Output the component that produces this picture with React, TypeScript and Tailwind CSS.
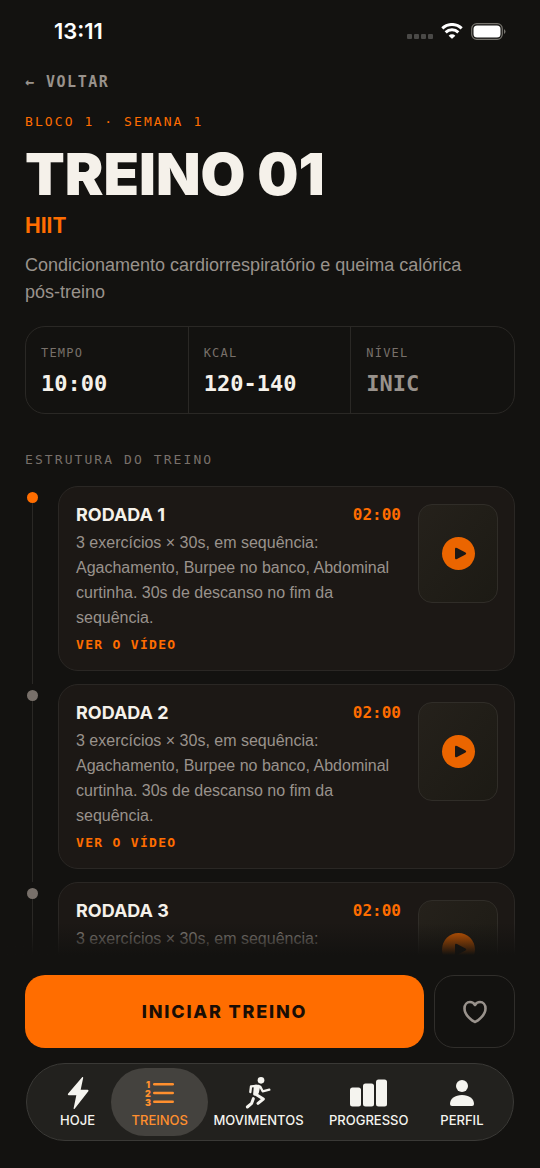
import { useState } from "react";
import type { ReactNode } from "react";

interface Round {
  id: number;
  title: string;
  time: string;
  description: string;
}

interface Tab {
  label: string;
  icon: ReactNode;
}

const description =
  "3 exercícios × 30s, em sequência: Agachamento, Burpee no banco, Abdominal curtinha. 30s de descanso no fim da sequência.";

const rounds: Round[] = [
  { id: 1, title: "RODADA 1", time: "02:00", description },
  { id: 2, title: "RODADA 2", time: "02:00", description },
  { id: 3, title: "RODADA 3", time: "02:00", description },
];

const stats = [
  { label: "TEMPO", value: "10:00", color: "text-[#f5f1ea]" },
  { label: "KCAL", value: "120-140", color: "text-[#f5f1ea]" },
  { label: "NÍVEL", value: "INIC", color: "text-[#99928c]" },
];

const mono = "font-['DejaVu_Sans_Mono',monospace]";

function WifiIcon() {
  return (
    <svg width="22" height="16" viewBox="0 0 66 48" fill="none" aria-hidden="true">
      <path d="M4 16 A42 42 0 0 1 62 16" stroke="#fff" strokeWidth="9" />
      <path d="M14 28 A27 27 0 0 1 52 28" stroke="#fff" strokeWidth="9" />
      <path d="M23 38 A14 14 0 0 1 43 38 L35 46 Q33 48 31 46 Z" fill="#fff" />
    </svg>
  );
}

function BatteryIcon() {
  return (
    <svg width="35" height="17" viewBox="0 0 35 17" fill="none" aria-hidden="true">
      <rect x="0.700" y="0.700" width="30.600" height="15.600" rx="5" stroke="#77756f" strokeWidth="1.200" />
      <rect x="2.500" y="2.500" width="27" height="12" rx="3.500" fill="#fff" />
      <path d="M33 6 Q34.500 7 34.500 8.500 Q34.500 10 33 11 Z" fill="#77756f" />
    </svg>
  );
}

function BoltIcon() {
  return (
    <svg width="22" height="34" viewBox="0 0 66 102" fill="currentColor" aria-hidden="true">
      <path d="M46 3 Q49 2 48.500 6 L41 41 H62 Q66 42 64 46 L23 98 Q19 101 20 96 L28 58 H5 Q1 57 3 53 Z" />
    </svg>
  );
}

function ListIcon() {
  return (
    <svg width="32" height="28" viewBox="0 0 32 28" fill="currentColor" aria-hidden="true">
      <g fontFamily="Inter, sans-serif" fontSize="9" fontWeight="900" textAnchor="middle">
        <text x="4" y="9">1</text>
        <text x="4" y="18">2</text>
        <text x="4" y="27">3</text>
      </g>
      <rect x="9" y="4" width="21" height="2.600" rx="1.300" />
      <rect x="9" y="12.700" width="21" height="2.600" rx="1.300" />
      <rect x="9" y="21.400" width="21" height="2.600" rx="1.300" />
    </svg>
  );
}

function RunIcon() {
  return (
    <svg width="26" height="34" viewBox="136 80 78 102" fill="none" stroke="currentColor" strokeLinecap="round" strokeLinejoin="round" aria-hidden="true">
      <circle cx="184" cy="93" r="10" fill="currentColor" stroke="none" />
      <path d="M170 110 L154 111 L152 128" strokeWidth="7" />
      <path d="M167 111 L177 111 L173 130 L165 134 Z" fill="currentColor" strokeWidth="9" />
      <path d="M182 112 L189 126 L209 121" strokeWidth="7" />
      <path d="M167 134 L191 149 L175 162" strokeWidth="9" />
      <path d="M161 148 L156 162 L143 173" strokeWidth="9" />
    </svg>
  );
}

function BarsIcon() {
  return (
    <svg width="37" height="28" viewBox="0 0 37 28" fill="currentColor" aria-hidden="true">
      <rect x="0" y="8.500" width="11" height="19" rx="2.500" />
      <rect x="13" y="4.500" width="11" height="23" rx="2.500" />
      <rect x="26" y="0.500" width="11" height="27" rx="2.500" />
    </svg>
  );
}

function PersonIcon() {
  return (
    <svg width="26" height="28" viewBox="0 0 26 28" fill="currentColor" aria-hidden="true">
      <circle cx="13" cy="7" r="6" />
      <path d="M1 25 C1 19.500 6 16 13 16 C20 16 25 19.500 25 25 Q25 27 23 27 H3 Q1 27 1 25 Z" />
    </svg>
  );
}

const tabs: Tab[] = [
  { label: "HOJE", icon: <BoltIcon /> },
  { label: "TREINOS", icon: <ListIcon /> },
  { label: "MOVIMENTOS", icon: <RunIcon /> },
  { label: "PROGRESSO", icon: <BarsIcon /> },
  { label: "PERFIL", icon: <PersonIcon /> },
];

function StatusBar() {
  return (
    <div className="flex h-16 shrink-0 items-center justify-between pr-[34px] pb-[2px] pl-[54px]">
      <span className="text-[22px] leading-6 font-semibold text-white">13:11</span>
      <div className="flex items-center gap-2">
        <div className="flex gap-[2px] pt-[10px]">
          {[0, 1, 2, 3].map((dot) => (
            <span key={dot} className="size-[5px] rounded-[1px] bg-[#4a4947]" />
          ))}
        </div>
        <WifiIcon />
        <BatteryIcon />
      </div>
    </div>
  );
}

function RoundItem({ round, active }: { round: Round; active: boolean }) {
  return (
    <li className="flex gap-[18px]">
      <div className="flex w-[15px] shrink-0 flex-col items-center pt-[6px]">
        <span
          className={`size-[11px] shrink-0 rounded-full ${active ? "bg-[#ff6d00]" : "bg-[#78706a]"}`}
        />
        <span className="w-px grow bg-[#2a2825]" />
      </div>
      <article className="mb-[13px] flex min-w-0 grow items-start gap-[17px] rounded-[20px] border border-[#2a2724] bg-[#1c1815] pt-[17px] pr-4 pb-4 pl-[17px]">
        <div className="min-w-0 grow">
          <div className="flex h-[22px] items-center justify-between">
            <h3 className="text-[18px] leading-5 font-bold text-[#f5f1ea]">{round.title}</h3>
            <span className={`${mono} text-[16px] leading-5 font-bold text-[#ff6d00]`}>{round.time}</span>
          </div>
          <p className="mt-1 font-['Liberation_Sans',sans-serif] text-[16px] leading-[25px] text-[#99928c]">
            {round.description}
          </p>
          <a href="#video" className={`${mono} mt-[6px] block text-[13px] leading-[18px] font-bold tracking-[0.1em] text-[#ff6d00]`}>
            VER O VÍDEO
          </a>
        </div>
        <button
          type="button"
          aria-label={`Reproduzir ${round.title}`}
          className="flex h-[99px] w-20 shrink-0 items-center justify-center rounded-[14px] border border-[#302d28] bg-linear-to-br from-[#25211b] to-[#1c1a14]"
        >
          <span className="flex size-[33px] items-center justify-center rounded-full bg-[#eb6500]">
            <svg width="13" height="13" viewBox="0 0 13 13" fill="#1c1815" className="ml-1" aria-hidden="true">
              <path d="M1 2 Q1 0 3 1 L11.500 5.500 Q13 6.500 11.500 7.500 L3 12 Q1 13 1 11 Z" />
            </svg>
          </span>
        </button>
      </article>
    </li>
  );
}

export default function App() {
  const [activeTab, setActiveTab] = useState("TREINOS");
  const [favorite, setFavorite] = useState(false);

  return (
    <div className="flex h-dvh flex-col overflow-hidden bg-[#131210] font-['Inter',sans-serif] text-[#f5f1ea]">
      <StatusBar />

      <main className="min-h-0 grow overflow-y-auto px-[25px] pt-2 [scrollbar-width:none]">
        <a href="#voltar" className={`${mono} block text-[15px] leading-5 font-bold tracking-[0.1em] text-[#99928c]`}>
          ← VOLTAR
        </a>
        <p className={`${mono} mt-5 text-[13px] leading-5 tracking-[0.16em] text-[#ff6d00]`}>
          BLOCO 1 · SEMANA 1
        </p>
        <h1 className="mt-4 text-[58px] leading-[52px] font-black">TREINO 01</h1>
        <p className="mt-3 text-[21px] leading-7 font-bold text-[#ff6d00]">HIIT</p>
        <p className="mt-3 font-['Liberation_Sans',sans-serif] text-[18px] leading-[27px] text-[#99928c]">
          Condicionamento cardiorrespiratório e queima calórica{" "}
          <span className="whitespace-nowrap">pós-treino</span>
        </p>

        <dl className="mt-5 grid grid-cols-3 divide-x divide-[#2a2825] rounded-[20px] border border-[#2a2825]">
          {stats.map((stat) => (
            <div key={stat.label} className="px-[15px] pt-4 pb-[15px]">
              <dt className={`${mono} text-[12px] leading-5 tracking-[0.1em] text-[#78706a]`}>{stat.label}</dt>
              <dd className={`${mono} mt-[7px] text-[22px] leading-7 font-bold ${stat.color}`}>{stat.value}</dd>
            </div>
          ))}
        </dl>

        <h2 className={`${mono} mt-9 text-[13px] leading-5 tracking-[0.16em] text-[#78706a]`}>
          ESTRUTURA DO TREINO
        </h2>
        <ol className="mt-4">
          {rounds.map((round) => (
            <RoundItem key={round.id} round={round} active={round.id === 1} />
          ))}
        </ol>
      </main>

      <footer className="relative shrink-0 bg-[#131210] px-[25px] pt-5 pb-[27px]">
        {/* Fade over the scrolling list */}
        <div className="pointer-events-none absolute inset-x-0 bottom-full h-8 bg-linear-to-t from-[#131210] to-transparent" />

        <div className="flex gap-[10px]">
          <button
            type="button"
            className="h-[73px] grow rounded-[20px] bg-[#ff6d00] text-[18px] font-extrabold tracking-[0.1em] text-[#1a0e05]"
          >
            INICIAR TREINO
          </button>
          <button
            type="button"
            aria-label="Favoritar"
            aria-pressed={favorite}
            onClick={() => setFavorite(!favorite)}
            className="flex h-[73px] w-[81px] shrink-0 items-center justify-center rounded-[20px] border border-[#302e2b] text-[#99928c]"
          >
            <svg width="26" height="24" viewBox="0 0 26 24" fill={favorite ? "currentColor" : "none"} stroke="currentColor" strokeWidth="2.600" strokeLinejoin="round" aria-hidden="true">
              <path d="M13 22 C11 21.500 2.500 15.500 2.500 8.500 C2.500 4.500 5 2 8 2 C10 2 12 3.200 13 5 C14 3.200 16 2 18 2 C21 2 23.500 4.500 23.500 8.500 C23.500 15.500 15 21.500 13 22 Z" />
            </svg>
          </button>
        </div>

        <nav className="mx-px mt-[15px] grid grid-cols-[67fr_97fr_100fr_120fr_66fr] rounded-full border border-[#3a3936] bg-[#22211e] py-1 pr-[18px] pl-[17px]">
          {tabs.map((tab) => (
            <button
              key={tab.label}
              type="button"
              onClick={() => setActiveTab(tab.label)}
              className={`flex h-[68px] flex-col items-center rounded-full pt-2 ${
                activeTab === tab.label ? "bg-[#44423e] text-[#ff8f2e]" : "text-[#f5f4ef]"
              }`}
            >
              <span className="flex h-[34px] items-center">{tab.icon}</span>
              <span className="text-[13px] leading-5 font-medium">{tab.label}</span>
            </button>
          ))}
        </nav>
      </footer>
    </div>
  );
}
